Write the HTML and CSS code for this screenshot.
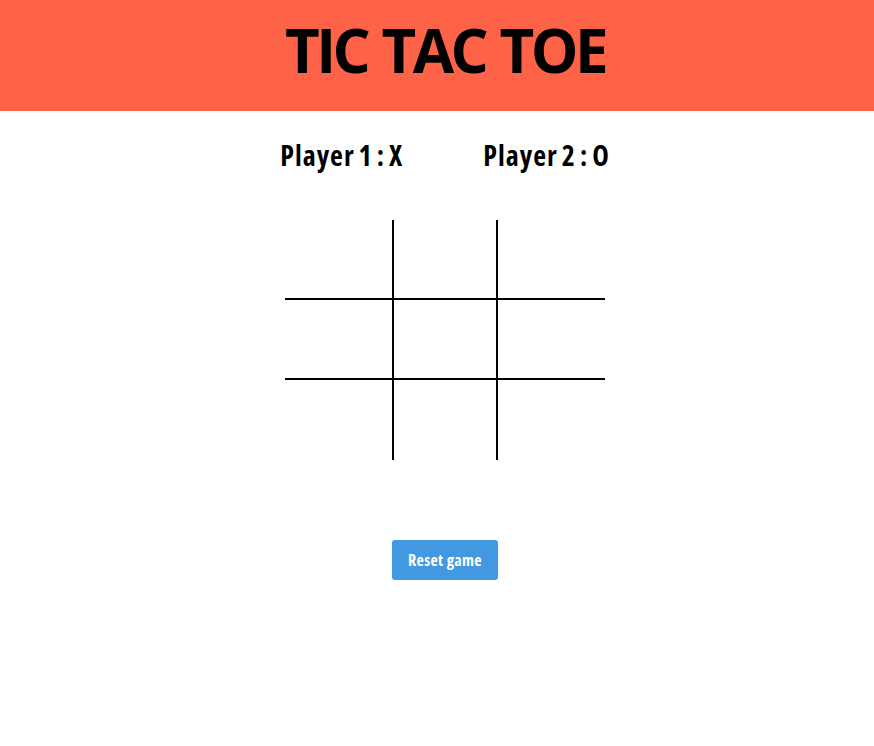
FILE: index.html
```html
<!DOCTYPE html>
<html>
<head>
<meta charset="utf-8">
<link rel="stylesheet" href="styles.css">
</head>
<body>
<header class="header">
  <h1 class="title">TIC TAC TOE</h1>
</header>
<main class="main">
  <div class="players">
    <div class="player">Player 1 : X</div>
    <div class="player">Player 2 : O</div>
  </div>
  <div class="board">
    <div class="cell c0"></div>
    <div class="cell c1"></div>
    <div class="cell c2"></div>
    <div class="cell c3"></div>
    <div class="cell c4"></div>
    <div class="cell c5"></div>
    <div class="cell c6"></div>
    <div class="cell c7"></div>
    <div class="cell c8"></div>
  </div>
  <button class="reset">Reset game</button>
</main>
</body>
</html>
```

FILE: styles.css
```css
* { box-sizing: border-box; }
html, body { margin: 0; padding: 0; background: #fff; }
body {
  font-family: "Open Sans", sans-serif;
  color: #000;
}
.header {
  background: #ff6347;
  height: 111px;
  padding: 0 0 12px 16px;
  display: flex;
  align-items: center;
  justify-content: center;
}
.title {
  margin: 0;
  font-size: 60px;
  font-weight: 700;
  line-height: 1;
  letter-spacing: -3.5px;
  word-spacing: 2px;
}
.main {
  display: flex;
  flex-direction: column;
  align-items: center;
  padding-left: 16px;
}
.players {
  display: flex;
  gap: 80px;
  margin-top: 28px;
}
.player {
  font-size: 28px;
  font-weight: 700;
  font-stretch: condensed;
  line-height: 32px;
  letter-spacing: 1px;
  word-spacing: -2px;
}
.board {
  margin-top: 49px;
  width: 320px;
  display: grid;
  grid-template-columns: 109px 104px 107px;
  grid-template-rows: 80px 80px 80px;
}
.cell { border: 0 solid #000; }
.c0, .c1, .c3, .c4, .c6, .c7 { border-right-width: 2px; }
.c0, .c1, .c2, .c3, .c4, .c5 { border-bottom-width: 2px; }
.reset {
  margin-top: 80px;
  width: 106px;
  height: 40px;
  padding: 0;
  border: none;
  border-radius: 3px;
  background: #4299e1;
  color: #fff;
  font-family: inherit;
  font-stretch: condensed;
  font-weight: 700;
  font-size: 16px;
  letter-spacing: 0.3px;
}
```
